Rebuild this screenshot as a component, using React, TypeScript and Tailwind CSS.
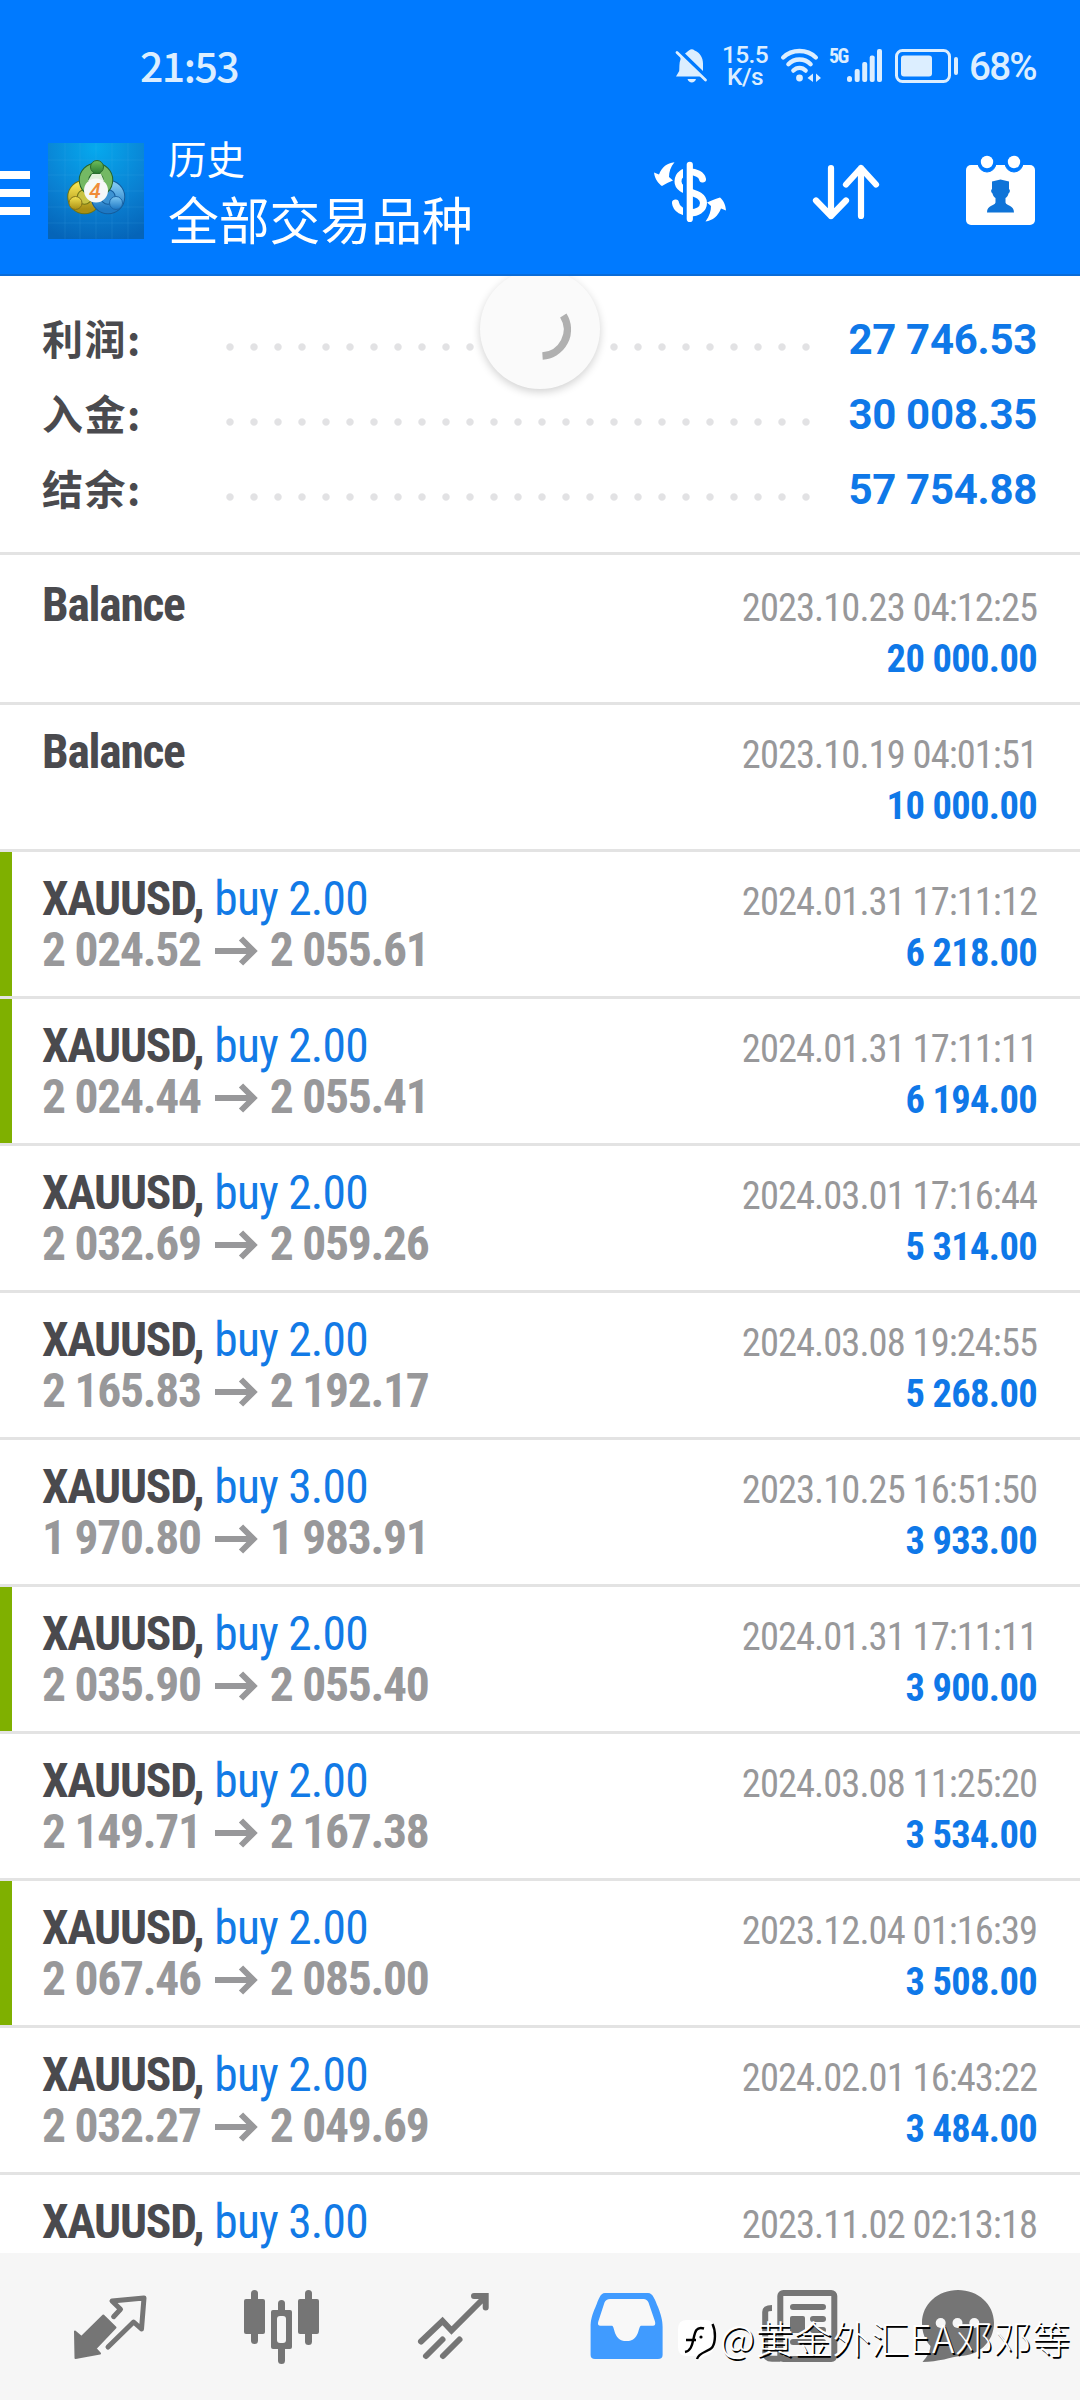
import { ReactNode } from "react";

type Deal = {
  side?: string;
  from?: string;
  to?: string;
  date: string;
  profit?: string;
  marked?: boolean;
};

const totals = [
  { label: "利润:", value: "27 746.53" },
  { label: "入金:", value: "30 008.35" },
  { label: "结余:", value: "57 754.88" },
];

const deals: Deal[] = [
  { date: "2023.10.23 04:12:25", profit: "20 000.00" },
  { date: "2023.10.19 04:01:51", profit: "10 000.00" },
  { side: "buy 2.00", from: "2 024.52", to: "2 055.61", date: "2024.01.31 17:11:12", profit: "6 218.00", marked: true },
  { side: "buy 2.00", from: "2 024.44", to: "2 055.41", date: "2024.01.31 17:11:11", profit: "6 194.00", marked: true },
  { side: "buy 2.00", from: "2 032.69", to: "2 059.26", date: "2024.03.01 17:16:44", profit: "5 314.00" },
  { side: "buy 2.00", from: "2 165.83", to: "2 192.17", date: "2024.03.08 19:24:55", profit: "5 268.00" },
  { side: "buy 3.00", from: "1 970.80", to: "1 983.91", date: "2023.10.25 16:51:50", profit: "3 933.00" },
  { side: "buy 2.00", from: "2 035.90", to: "2 055.40", date: "2024.01.31 17:11:11", profit: "3 900.00", marked: true },
  { side: "buy 2.00", from: "2 149.71", to: "2 167.38", date: "2024.03.08 11:25:20", profit: "3 534.00" },
  { side: "buy 2.00", from: "2 067.46", to: "2 085.00", date: "2023.12.04 01:16:39", profit: "3 508.00", marked: true },
  { side: "buy 2.00", from: "2 032.27", to: "2 049.69", date: "2024.02.01 16:43:22", profit: "3 484.00" },
  { side: "buy 3.00", date: "2023.11.02 02:13:18" },
];

function StatusBar() {
  return (
    <div className="flex h-[108px] items-center pt-6 pr-[40px] pl-[140px] text-[#dceeff]">
      <span className="-mt-[2px] font-['Noto_Sans_CJK_SC',sans-serif] text-[41px] font-medium tracking-[-1.5px]">21:53</span>
      <svg className="ml-auto" width="34" height="38" viewBox="0 0 34 38" fill="currentColor">
        <path d="M6.5 12.5 C5 16 5.5 21 5.2 24 L2 29.5 H27 L6.5 9.5 Z" />
        <path d="M11 6.5 C13 4.8 14.5 4 15.2 3.2 C16.8 2 19 2 20.6 3.4 C26.5 6 29 11 29 16.5 V24 Z" />
        <path d="M3 5.5 L31.5 33" stroke="currentColor" strokeWidth="2.8" strokeLinecap="round" />
        <path d="M13.5 32 H22 C21 36.5 14.5 36.5 13.5 32 Z" />
      </svg>
      <div className="ml-[13px] flex w-[48px] flex-col items-center font-['Roboto',sans-serif] text-[24.500px] leading-[22px] font-medium tracking-[-0.6px]">
        <span>15.5</span>
        <span>K/s</span>
      </div>
      <svg className="-mt-[3px] ml-[11px]" width="44" height="36" viewBox="0 0 44 36" fill="none" stroke="currentColor" strokeWidth="4.4" strokeLinecap="round">
        <path d="M3.2 10.5 C12 1.8 27 1.8 35.8 10.5" />
        <path d="M8.4 17.2 C14.5 11 24.5 11 30.6 17.2" />
        <path d="M13.4 23.6 C16.8 20 22.2 20 25.6 23.6" />
        <circle cx="19.5" cy="31" r="3.4" fill="currentColor" stroke="none" />
        <path d="M33 26.5 V35 L27.5 31 Z M36 26.5 V35 L41 31 Z" fill="currentColor" stroke="none" />
      </svg>
      <span className="mb-[20px] ml-[5px] w-[17px] font-['Roboto_Condensed',sans-serif] text-[20px] leading-none font-bold tracking-[-1.6px]">5G</span>
      <svg className="-mt-[3px]" width="37" height="36" viewBox="0 0 37 36" fill="currentColor">
        <rect x="1" y="29" width="5" height="6" rx="2.5" />
        <rect x="8.7" y="22" width="5" height="13" rx="2" />
        <rect x="16.2" y="15" width="5" height="20" rx="2" />
        <rect x="23.7" y="8.500" width="5" height="26.500" rx="2" />
        <rect x="31" y="2" width="5" height="33" rx="2" />
      </svg>
      <svg className="ml-[11px]" width="66" height="36" viewBox="0 0 66 36">
        <rect x="2.500" y="2.500" width="53" height="31" rx="6" fill="none" stroke="currentColor" strokeWidth="3" />
        <rect x="7" y="7.500" width="31" height="21" rx="3" fill="currentColor" />
        <rect x="60" y="9" width="4" height="18" rx="2" fill="currentColor" />
      </svg>
      <span className="mt-[2px] ml-[9px] w-[71px] font-['Roboto',sans-serif] text-[38.500px] font-medium tracking-[-1.7px]">68%</span>
    </div>
  );
}

function Logo() {
  return (
    <svg className="ml-[18px]" width="96" height="96" viewBox="0 0 96 96">
      <defs>
        <radialGradient id="sky" cx="0.5" cy="0.05" r="1">
          <stop offset="0" stopColor="#06a9ee" />
          <stop offset="0.6" stopColor="#0a80d2" />
          <stop offset="1" stopColor="#0564b8" />
        </radialGradient>
        <linearGradient id="green" x1="0" y1="0" x2="0" y2="1">
          <stop offset="0" stopColor="#6fbd5b" />
          <stop offset="1" stopColor="#2c7d33" />
        </linearGradient>
        <linearGradient id="gold" x1="0" y1="0" x2="0" y2="1">
          <stop offset="0" stopColor="#f4e251" />
          <stop offset="1" stopColor="#a98f14" />
        </linearGradient>
        <linearGradient id="aqua" x1="0" y1="0" x2="0" y2="1">
          <stop offset="0" stopColor="#7cc6f2" />
          <stop offset="1" stopColor="#1d78c4" />
        </linearGradient>
      </defs>
      <rect width="96" height="96" fill="url(#sky)" />
      <path
        d="M17 0V96M32 0V96M48 0V96M64 0V96M80 0V96M0 17H96M0 32H96M0 48H96M0 64H96M0 80H96"
        stroke="#5cc0f5"
        strokeOpacity="0.14"
      />
      <circle cx="36.500" cy="54" r="12" fill="#c9c443" stroke="#6f7414" strokeWidth="10.500" />
      <circle cx="36.500" cy="54" r="12" fill="none" stroke="url(#gold)" strokeWidth="8.500" />
      <circle cx="60" cy="54" r="12" fill="#3d93d3" stroke="#145c9c" strokeWidth="10.500" />
      <circle cx="60" cy="54" r="12" fill="none" stroke="url(#aqua)" strokeWidth="8.500" />
      <circle cx="48" cy="37" r="12" fill="#3c8f45" stroke="#24642c" strokeWidth="10.500" />
      <circle cx="48" cy="37" r="12" fill="none" stroke="#74b964" strokeWidth="8.500" />
      <path d="M44 31 L40 38 L56 38 L53 31 Z" fill="#dff0dc" />
      <circle cx="49" cy="24" r="6.500" fill="url(#green)" stroke="#2a6a2c" />
      <circle cx="27.500" cy="60" r="6.500" fill="url(#gold)" stroke="#84751a" />
      <circle cx="68" cy="60" r="6.500" fill="url(#aqua)" stroke="#1c66a8" />
      <circle cx="48" cy="47.500" r="12" fill="#f6f8f8" />
      <text x="47" y="55" textAnchor="middle" fontSize="21" fill="#f08c3a" className="font-['Roboto',sans-serif] font-medium italic">
        4
      </text>
    </svg>
  );
}

function Toolbar() {
  return (
    <div className="flex h-[168px] items-center border-b-2 border-[#0a6cd8] text-white">
      <div className="mt-1 flex w-[30px] flex-col gap-[10px]">
        <span className="h-2 bg-white" />
        <span className="h-2 bg-white" />
        <span className="h-2 bg-white" />
      </div>
      <Logo />
      <div className="-mt-[7px] ml-6 flex flex-col font-['Noto_Sans_CJK_SC',sans-serif] leading-[61px]">
        <span className="text-[38.500px]">历史</span>
        <span className="text-[50.800px]">全部交易品种</span>
      </div>
      <svg className="mt-[2px] ml-auto" width="72" height="64" viewBox="0 0 72 64" fill="none">
        <path
          d="M48.500 19 C47 10.500 24 7 24 21.500 C24 34 49.500 30 49.500 43 C49.500 56.500 23 55.500 21.500 43"
          stroke="white"
          strokeWidth="7"
          strokeLinecap="round"
        />
        <path d="M31 4V60" stroke="#007aff" strokeWidth="4" />
        <path d="M35.800 4.800V59" stroke="white" strokeWidth="6.200" strokeLinecap="round" />
        <path d="M0 12.500 L5 14.500 C8 7 13 3 20.500 2.300 C16.500 7 15 12 15 17 L19 20.500 C15 22 11.500 24 8 26 C5 24 1 20 0 12.500 Z" fill="white" />
        <path d="M72 50.500 L67 48.500 C64 56 59 60.500 51.500 61.500 C55.500 56 57 51 57 46 L53 42.500 C57 41 60.500 39 66 37.500 C69 40 71.500 44 72 50.500 Z" fill="white" />
      </svg>
      <svg className="mt-[2px] ml-[84px]" width="72" height="64" viewBox="0 0 72 64" fill="none" stroke="white" strokeWidth="6.200" strokeLinecap="round" strokeLinejoin="round">
        <path d="M21 8V56M6 40.500 L21 56 L36 40.500" />
        <path d="M51 56V8M36 24.500 L51 8 L66 24.500" />
      </svg>
      <svg className="mr-[42px] ml-[82px]" width="74" height="76" viewBox="0 0 74 76">
        <rect x="2" y="12" width="69" height="60" rx="5" fill="white" />
        <path d="M14 8 V10 A9 9 0 0 0 32 10 V8 Z M41 8 V10 A9 9 0 0 0 59 10 V8 Z" fill="#007aff" stroke="#007aff" />
        <circle cx="23" cy="9" r="6.200" fill="white" />
        <circle cx="50" cy="9" r="6.200" fill="white" />
        <path
          d="M28 28.500 L36.500 26.500 L45 28.500 V36 C46.500 37 46 39.500 44.500 40.500 C44 42.500 43 44 41.500 45 V49.500 C42.500 53 50 52 50 59.500 H23 C23 52 30.500 53 31.500 49.500 V45 C30 44 29 42.500 28.500 40.500 C27 39.500 26.500 37 28 36 Z"
          fill="#0f74d8"
        />
      </svg>
    </div>
  );
}

function Totals() {
  return (
    <section className="relative h-[276px] overflow-hidden pt-[26px] pr-[43px] pl-[42px]">
      {totals.map((row) => (
        <div key={row.label} className="flex h-[75px] items-center">
          <span className="w-[176px] pb-1 font-['Noto_Sans_CJK_SC',sans-serif] text-[41px] leading-none font-bold tracking-[1.500px] text-[#4a4a4e]">
            {row.label}
          </span>
          <span className="mt-[15px] h-2 w-[600px] bg-[radial-gradient(circle,#e2e2e4_3.200px,transparent_4.200px)] bg-[length:24px_8px]" />
          <span className="ml-auto font-['Roboto',sans-serif] text-[42px] leading-none font-bold tracking-[-0.3px] text-[#0f78e8]">
            {row.value}
          </span>
        </div>
      ))}
      {/* pull-to-refresh spinner */}
      <div className="absolute -top-[7px] left-[480px] size-[120px] rounded-full bg-[#fafafa] shadow-[0_3px_9px_rgba(0,0,0,0.18)]">
        <svg width="120" height="120" viewBox="0 0 120 120" fill="none">
          <path d="M83.300 46.500 A26.500 26.500 0 0 1 62.500 87" stroke="#b0b0b0" strokeWidth="7.500" />
        </svg>
      </div>
    </section>
  );
}

function DealRow({ side, from, to, date, profit, marked }: Deal) {
  return (
    <div className="flex h-[147px] border-b-[3px] border-[#e3e3e3] pr-[43px] font-['Roboto_Condensed',sans-serif]">
      <span className={marked ? "w-3 bg-[#7fb000]" : "w-3"} />
      <div className="flex grow flex-col pt-[22px] pl-[30px] text-[47.500px] leading-[51px] font-bold whitespace-nowrap">
        <div className="flex tracking-[-1.250px] text-[#4a4a4e]">
          {side ? "XAUUSD," : "Balance"}
          {side && <span className="ml-[11px] font-normal tracking-[-0.800px] text-[#127ae6]">{side}</span>}
        </div>
        {from && (
          <div className="flex items-center tracking-[-1.250px] text-[#98989a]">
            {from}
            <svg className="mt-[1px] mr-[12px] ml-[14px]" width="43" height="30" viewBox="0 0 43 30" fill="none" stroke="currentColor" strokeWidth="6">
              <path d="M0 15H38M26 2.500L38.500 15L26 27.500" />
            </svg>
            {to}
          </div>
        )}
      </div>
      <div className="flex flex-col items-end pt-6 text-[38.500px] leading-[51px] whitespace-nowrap">
        <span className="tracking-[-0.950px] text-[#98989a]">{date}</span>
        <span className="font-bold tracking-[-0.650px] text-[#0f78e8]">{profit}</span>
      </div>
    </div>
  );
}

function NavIcon({ children }: { children: ReactNode }) {
  return (
    <svg width="80" height="80" viewBox="0 0 80 80" fill="none" strokeLinecap="round" strokeLinejoin="round">
      {children}
    </svg>
  );
}

function BottomNav() {
  return (
    <nav className="relative grid h-[147px] grid-cols-6 place-items-center bg-[#f6f6f6] px-6">
      <NavIcon>
        <path d="M5 44.500 L11.500 50 L33.300 28.500 L45.500 40.500 L25.500 61.500 L30 66.500 L5.500 71 Z" fill="#757575" stroke="#757575" strokeWidth="2" />
        <path d="M43.600 29.700 L50.500 22.300 L42 14 L74 11 L71.500 42 L63.600 35 L38 60" stroke="#757575" strokeWidth="5" />
      </NavIcon>
      <NavIcon>
        <g fill="#757575">
          <rect x="2" y="12" width="21" height="35" rx="2" />
          <rect x="9" y="3" width="7" height="54" rx="3.500" />
          <rect x="29" y="23" width="21" height="39" rx="2" />
          <rect x="36" y="13" width="7" height="64" rx="3.500" />
          <rect x="56" y="12" width="21" height="35" rx="2" />
          <rect x="63" y="3" width="7" height="55" rx="3.500" />
        </g>
        <rect x="35" y="29" width="9" height="27" rx="3" fill="#f6f6f6" />
      </NavIcon>
      <NavIcon>
        <path
          d="M7 54.500 L28.500 34 L37.500 43.500 L71 10 M60 9 H71.700 V20.500 M12 69 L28.500 52.500 M29 69 L45.500 52.500"
          stroke="#757575"
          strokeWidth="6"
          strokeLinejoin="miter"
        />
      </NavIcon>
      <NavIcon>
        <path d="M19 6 H62 C67 6 69 13 72 20 C75 28 76.600 33 76.600 40 V68 Q76.600 72 72 72 H9 Q4.600 72 4.600 68 V40 C4.600 33 6 28 9.500 20 C12.500 13 14 6 19 6 Z" fill="#409bff" />
        <path d="M24 12 H57.500 Q61 12 62.500 15.500 L69 34.500 Q70 38.700 67 38.700 H55 C52 38.700 54 54 40.500 54 C27 54 29 38.700 26 38.700 H14.500 Q11 38.700 12.300 34.500 L18.500 15.500 Q20 12 24 12 Z" fill="#f8f8f8" />
      </NavIcon>
      <NavIcon>
        <path d="M22.500 71.700 H14 Q7.200 71.700 7.200 65 V25 Q7.200 21 14 21" stroke="#757575" strokeWidth="6" strokeLinecap="butt" />
        <rect x="22.300" y="6" width="54" height="66" rx="3" stroke="#757575" strokeWidth="6" />
        <path d="M35 20 H65 M55 32 H65 M55 43 H65 M35 55 H65" stroke="#757575" strokeWidth="6" />
        <rect x="32" y="29" width="15" height="17" rx="2" fill="#757575" />
      </NavIcon>
      <div className="-ml-6">
        <NavIcon>
          <path d="M40 3 C60 3 76 17 76 36 C76 55 60 69 42 69 C34 70 20 75 4.500 75 C9 70 12 65 12.500 59 C7 53 4 45 4 36 C4 17 20 3 40 3 Z" fill="#757575" />
          <circle cx="22.700" cy="36" r="5" fill="#f6f6f6" />
          <circle cx="39.500" cy="36" r="5" fill="#f6f6f6" />
          <circle cx="56.300" cy="36" r="5" fill="#f6f6f6" />
        </NavIcon>
      </div>
      {/* author watermark lies over the tabs */}
      <div className="absolute top-[58px] left-[677px] flex items-center whitespace-nowrap">
        <svg className="mt-[6px]" width="43" height="46" viewBox="0 0 43 46" fill="none">
          <path d="M10 3 H28 Q37 3 37 12 V28 Q37 37 28 39 L20 44 V39 H10 Q1 39 1 30 V12 Q1 3 10 3 Z" fill="white" />
          <path d="M27 11.500 C19 9 18 15 16.500 22 C15 29 13.500 34 8 35 M9 23 H19" stroke="black" strokeWidth="2.400" />
          <path d="M35.500 7 C39 14 38.500 25 35.500 30 C31.500 35 22 35 20 42" stroke="black" strokeWidth="2.400" />
          <circle cx="24" cy="20" r="1.600" fill="black" />
        </svg>
        <span className="font-['Noto_Sans_CJK_SC',sans-serif] text-[38px] leading-[44px] font-light tracking-[0.600px] text-white [text-shadow:1.500px_1.500px_0.500px_#000]">
          @黄金外汇EA邓邓等
        </span>
      </div>
    </nav>
  );
}

export default function App() {
  return (
    <div className="flex h-[2400px] w-[1080px] flex-col overflow-hidden bg-white">
      <header className="bg-[#007aff]">
        <StatusBar />
        <Toolbar />
      </header>
      <Totals />
      <main className="h-[1701px] overflow-hidden border-t-[3px] border-[#e3e3e3] pt-[3px]">
        {deals.map((deal) => (
          <DealRow key={deal.date} {...deal} />
        ))}
      </main>
      <BottomNav />
    </div>
  );
}
